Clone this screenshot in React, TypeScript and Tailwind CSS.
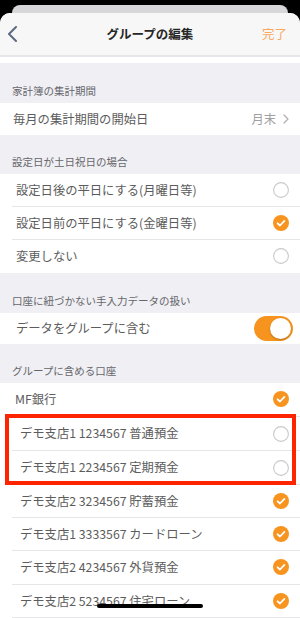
import React from "react";

const FONT = { fontFamily: '"Noto Sans CJK JP", "Noto Sans", sans-serif' };

function Radio({ checked }: { checked: boolean }) {
  if (checked) {
    return (
      <svg width="16" height="16" viewBox="0 0 16 16" className="shrink-0">
        <circle cx="8" cy="8" r="8" fill="#f7941f" />
        <polyline points="4.6,8.3 7,10.5 11.4,5.9" fill="none" stroke="#fff" strokeWidth="1.8" strokeLinecap="round" strokeLinejoin="round" />
      </svg>
    );
  }
  return (
    <svg width="16" height="16" viewBox="0 0 16 16" className="shrink-0">
      <circle cx="8" cy="8" r="7.4" fill="#fff" stroke="#c9c9c9" strokeWidth="1.1" />
    </svg>
  );
}

function Label({ h, text }: { h: string; text: string }) {
  return (
    <div className={`${h} flex items-end pl-[12px] pb-[5px]`}>
      <span className="text-[10.5px] leading-[14px] text-[#66666a]">{text}</span>
    </div>
  );
}

function Row({
  h,
  text,
  indent,
  divider = true,
  right,
}: {
  h: string;
  text: string;
  indent: string;
  divider?: boolean;
  right: React.ReactNode;
}) {
  return (
    <div className={`${h} bg-white pl-[12px]`}>
      <div className={`h-full flex items-center justify-between pr-[11px] ${indent} ${divider ? "border-b border-[#e6e6e8]" : ""}`}>
        <span className="text-[12.3px] text-[#5c5c5c] whitespace-nowrap">{text}</span>
        {right}
      </div>
    </div>
  );
}

export default function App() {
  return (
    <div className="w-[300px] h-[618px] bg-black overflow-hidden relative flex flex-col" style={FONT}>
      <div className="h-[13px] shrink-0 pt-[5px] px-[12px]">
        <div className="h-[8px] bg-[#d7d7d9] rounded-t-[9px]" />
      </div>
      <div className="flex-1 bg-[#efeff4] rounded-t-[10px] overflow-hidden flex flex-col">
        <div className="h-[42px] shrink-0 bg-[#f7f7f7] flex items-center">
          <div className="w-[60px] pl-[7px] flex items-center">
            <svg width="11" height="16" viewBox="0 0 11 16">
              <polyline points="9,1 2,8 9,15" fill="none" stroke="#5d6b80" strokeWidth="2" strokeLinecap="round" strokeLinejoin="round" />
            </svg>
          </div>
          <div className="flex-1 text-center text-[12.5px] font-bold text-[#262626]">グループの編集</div>
          <div className="w-[60px] pr-[13px] text-right text-[12.5px] text-[#f7a95e]">完了</div>
        </div>
        <div className="h-[2px] shrink-0 bg-[#e6e6e8]" />
        <div className="h-[6px] shrink-0 bg-white" />

        <Label h="h-[41px]" text="家計簿の集計期間" />
        <Row
          h="h-[32px]"
          indent="pl-[1px]"
          divider={false}
          text="毎月の集計期間の開始日"
          right={
            <div className="flex items-center gap-[7px] text-[12.3px] text-[#a0a0a0]">
              <span>月末</span>
              <svg width="6" height="10" viewBox="0 0 6 10">
                <polyline points="1,1 5,5 1,9" fill="none" stroke="#b0b0b0" strokeWidth="1.2" strokeLinecap="round" strokeLinejoin="round" />
              </svg>
            </div>
          }
        />

        <Label h="h-[39px]" text="設定日が土日祝日の場合" />
        <Row h="h-[34px]" indent="pl-[4px]" text="設定日後の平日にする(月曜日等)" right={<Radio checked={false} />} />
        <Row h="h-[33px]" indent="pl-[4px]" text="設定日前の平日にする(金曜日等)" right={<Radio checked />} />
        <Row h="h-[34px]" indent="pl-[4px]" divider={false} text="変更しない" right={<Radio checked={false} />} />

        <Label h="h-[40px]" text="口座に紐づかない手入力データの扱い" />
        <Row
          h="h-[32px]"
          indent="pl-[4px]"
          divider={false}
          text="データをグループに含む"
          right={
            <div className="w-[39px] h-[25px] rounded-full bg-[#f7941f] flex items-center justify-end pr-[2px] -mr-[4px]">
              <div className="w-[21px] h-[21px] rounded-full bg-white shadow-[0_1px_2px_rgba(0,0,0,0.25)]" />
            </div>
          }
        />

        <Label h="h-[39px]" text="グループに含める口座" />
        <Row h="h-[35px]" indent="pl-[3px]" text="MF銀行" right={<Radio checked />} />
        <div className="relative">
          <Row h="h-[34px]" indent="pl-[8px]" text="デモ支店1 1234567 普通預金" right={<Radio checked={false} />} />
          <Row h="h-[34px]" indent="pl-[8px]" text="デモ支店1 2234567 定期預金" right={<Radio checked={false} />} />
          <div className="absolute top-[-3px] bottom-0 left-[5px] right-[4px] border-[4px] border-[#ff2400]" />
        </div>
        <Row h="h-[33px]" indent="pl-[8px]" text="デモ支店2 3234567 貯蓄預金" right={<Radio checked />} />
        <Row h="h-[34px]" indent="pl-[8px]" text="デモ支店1 3333567 カードローン" right={<Radio checked />} />
        <Row h="h-[34px]" indent="pl-[8px]" text="デモ支店2 4234567 外貨預金" right={<Radio checked />} />
        <Row h="h-[34px]" indent="pl-[8px]" text="デモ支店2 5234567 住宅ローン" right={<Radio checked />} />
      </div>
      <div className="absolute left-[97px] top-[604px] w-[106px] h-[4px] rounded-full bg-black" />
    </div>
  );
}
